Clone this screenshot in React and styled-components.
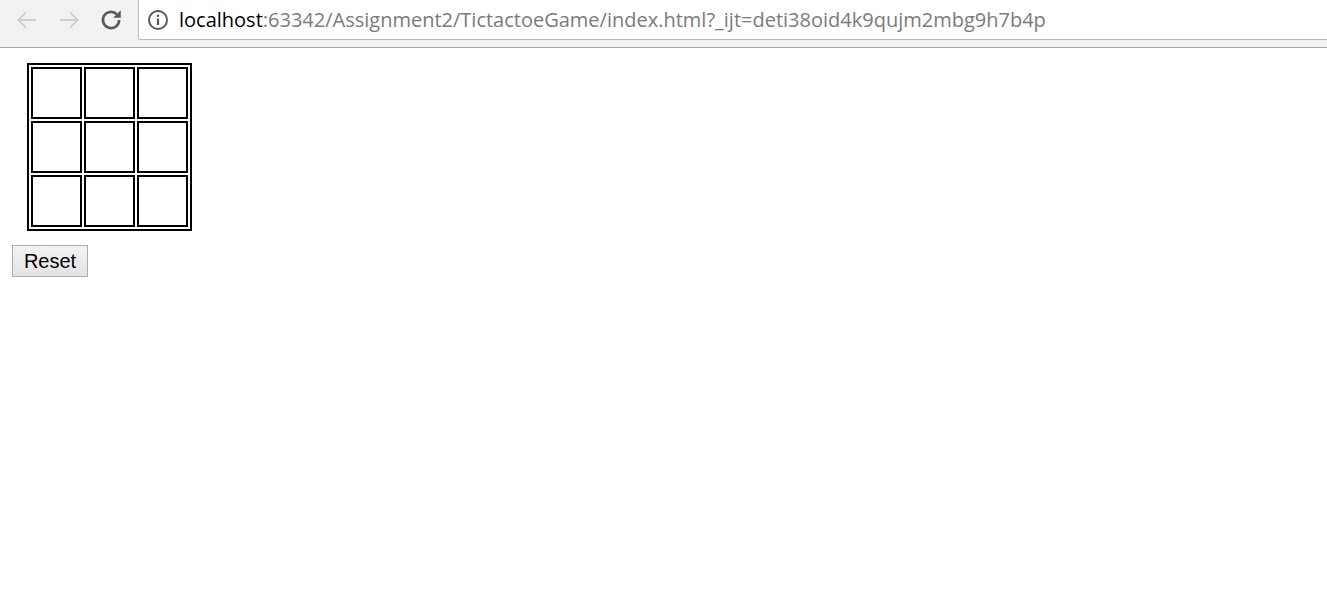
import React, { useState } from "react";
import styled, { createGlobalStyle } from "styled-components";

const GlobalStyle = createGlobalStyle`
  html, body {
    margin: 0;
    padding: 0;
    background: #ffffff;
  }
  body {
    font-family: "Liberation Sans", Arial, sans-serif;
  }
`;

const Toolbar = styled.div`
  height: 47px;
  background: #f2f2f2;
  border-bottom: 1px solid #a3a3a3;
  display: flex;
  align-items: flex-start;
  box-sizing: content-box;
`;

const NavButtons = styled.div`
  width: 138px;
  height: 40px;
  display: flex;
  align-items: center;
  padding-left: 14px;
  gap: 16px;
  box-sizing: border-box;
`;

const NavIcon = styled.svg`
  width: ${props => props.size || 26}px;
  height: ${props => props.size || 26}px;
  flex: none;
`;

const AddressBar = styled.div`
  flex: 1;
  height: 40px;
  background: #ffffff;
  border-left: 1px solid #b9b9b9;
  border-bottom: 1px solid #b9b9b9;
  border-bottom-left-radius: 2px;
  display: flex;
  align-items: center;
  padding-left: 7px;
  gap: 9px;
  box-sizing: border-box;
`;

const Url = styled.span`
  font-family: "Open Sans", "Noto Sans", sans-serif;
  font-size: 20px;
  color: #7b7b7b;
  white-space: nowrap;
`;

const Host = styled.span`
  color: #000000;
`;

const Page = styled.div`
  padding: 15px 0 0 12px;
`;

const Board = styled.table`
  margin-left: 15px;
  border: 2px solid #000;
  border-spacing: 2px;
`;

const Cell = styled.td`
  width: 47px;
  height: 48px;
  padding: 0;
  border: 2px solid #000;
  cursor: pointer;
  text-align: center;
  font-size: 32px;
`;

const ResetButton = styled.button`
  margin-top: 14px;
  width: 76px;
  height: 32px;
  font-family: "Liberation Sans", Arial, sans-serif;
  font-size: 20px;
  color: #000;
  background: linear-gradient(#f3f3f3, #e3e3e3);
  border: 1px solid #acacac;
  border-radius: 0;
  padding: 0;
  display: block;
`;

const App = () => {
  const [cells, setCells] = useState(Array(9).fill(""));
  const [turn, setTurn] = useState("X");

  const play = i => {
    if (cells[i]) return;
    const next = cells.slice();
    next[i] = turn;
    setCells(next);
    setTurn(turn === "X" ? "O" : "X");
  };

  const rows = [0, 1, 2];

  return (
    <>
      <GlobalStyle />
      <Toolbar>
        <NavButtons>
          <NavIcon viewBox="0 0 24 24" fill="none" stroke="#cdcdcd" strokeWidth="1.8">
            <path d="M20 12H5M11 5l-7 7 7 7" />
          </NavIcon>
          <NavIcon viewBox="0 0 24 24" fill="none" stroke="#cdcdcd" strokeWidth="1.8">
            <path d="M4 12h15M13 5l7 7-7 7" />
          </NavIcon>
          <NavIcon viewBox="0 0 24 24" fill="none" stroke="#5a5a5a" strokeWidth="2.4">
            <path d="M19.5 12a7.5 7.5 0 1 1-2.2-5.3" />
            <path d="M21 3v7h-7z" fill="#5a5a5a" strokeWidth="0" />
          </NavIcon>
        </NavButtons>
        <AddressBar>
          <NavIcon size={24} viewBox="0 0 24 24">
            <circle cx="12" cy="12" r="9" fill="none" stroke="#5a5a5a" strokeWidth="2" />
            <rect x="10.9" y="10.5" width="2.2" height="6.5" fill="#5a5a5a" />
            <circle cx="12" cy="7.8" r="1.3" fill="#5a5a5a" />
          </NavIcon>
          <Url>
            <Host>localhost</Host>:63342/Assignment2/TictactoeGame/index.html?_ijt=deti38oid4k9qujm2mbg9h7b4p
          </Url>
        </AddressBar>
      </Toolbar>
      <Page>
        <Board>
          <tbody>
            {rows.map(r => (
              <tr key={r}>
                {rows.map(c => (
                  <Cell key={c} onClick={() => play(r * 3 + c)}>
                    {cells[r * 3 + c]}
                  </Cell>
                ))}
              </tr>
            ))}
          </tbody>
        </Board>
        <ResetButton
          onClick={() => {
            setCells(Array(9).fill(""));
            setTurn("X");
          }}
        >
          Reset
        </ResetButton>
      </Page>
    </>
  );
};

export default App;
